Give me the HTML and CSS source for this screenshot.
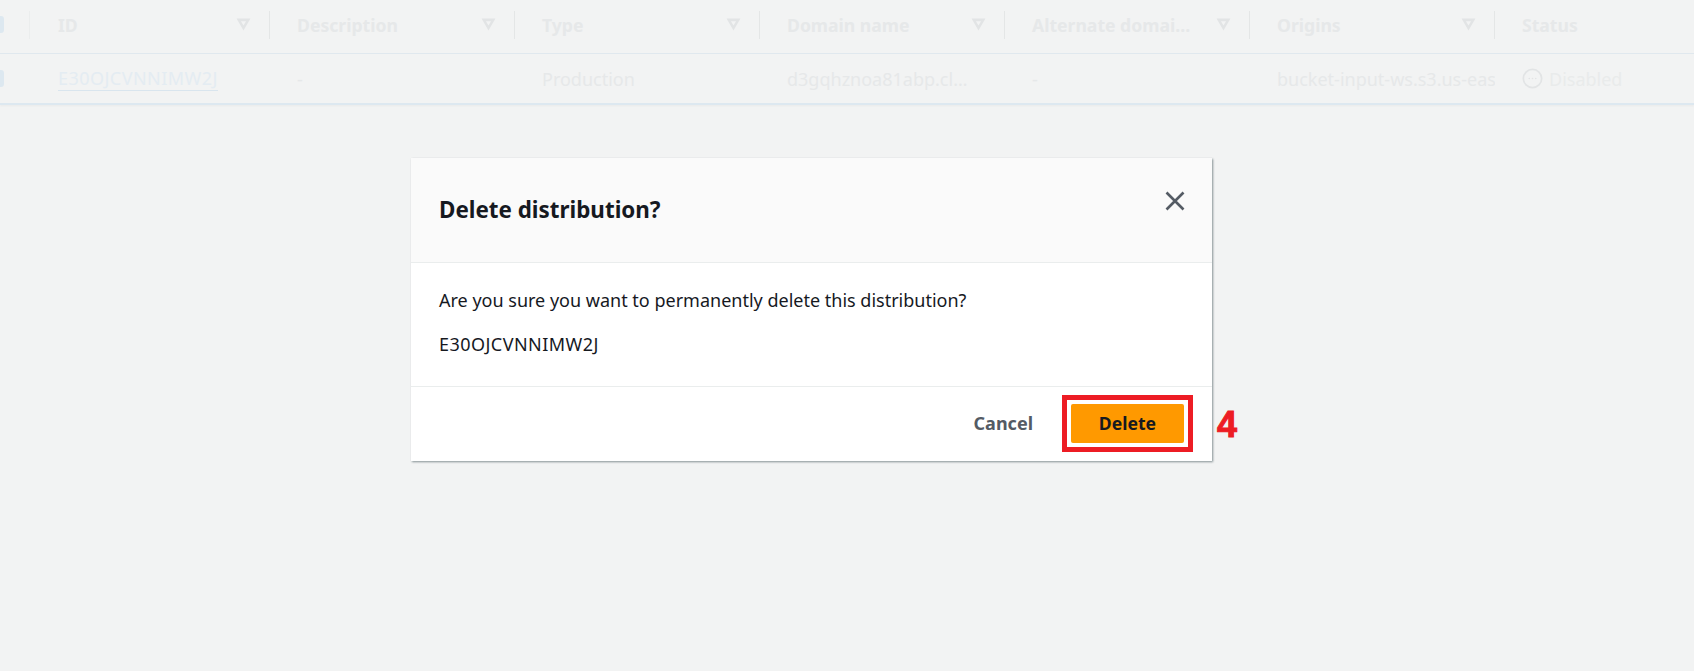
FILE: index.html
```html
<!DOCTYPE html>
<html lang="en">
<head>
<meta charset="utf-8">
<title>Delete distribution</title>
<link rel="stylesheet" href="styles.css">
</head>
<body>
<div class="table">
  <div class="row head">
    <div class="check-cell"><span class="check"></span></div>
    <div class="cell first"><span class="label">ID</span><svg class="sort" viewBox="0 0 14 12"><path d="M.5 .5h13L7 11.5z M4.6 2.9h4.8L7 7z"/></svg></div>
    <div class="cell"><span class="label">Description</span><svg class="sort" viewBox="0 0 14 12"><path d="M.5 .5h13L7 11.5z M4.6 2.9h4.8L7 7z"/></svg></div>
    <div class="cell"><span class="label">Type</span><svg class="sort" viewBox="0 0 14 12"><path d="M.5 .5h13L7 11.5z M4.6 2.9h4.8L7 7z"/></svg></div>
    <div class="cell"><span class="label">Domain name</span><svg class="sort" viewBox="0 0 14 12"><path d="M.5 .5h13L7 11.5z M4.6 2.9h4.8L7 7z"/></svg></div>
    <div class="cell"><span class="label">Alternate domai…</span><svg class="sort" viewBox="0 0 14 12"><path d="M.5 .5h13L7 11.5z M4.6 2.9h4.8L7 7z"/></svg></div>
    <div class="cell"><span class="label">Origins</span><svg class="sort" viewBox="0 0 14 12"><path d="M.5 .5h13L7 11.5z M4.6 2.9h4.8L7 7z"/></svg></div>
    <div class="cell last"><span class="label">Status</span></div>
  </div>
  <div class="row body">
    <div class="check-cell"><span class="check"></span></div>
    <div class="cell first"><a class="link">E30OJCVNNIMW2J</a></div>
    <div class="cell"><span class="value">-</span></div>
    <div class="cell"><span class="value">Production</span></div>
    <div class="cell"><span class="value">d3gqhznoa81abp.cl…</span></div>
    <div class="cell"><span class="value">-</span></div>
    <div class="cell"><span class="value">bucket-input-ws.s3.us-eas</span></div>
    <div class="cell last status"><svg class="status-icon" viewBox="0 0 22 22"><circle cx="11" cy="11" r="9.6"/><circle class="dot" cx="7.6" cy="11" r=".85"/><circle class="dot" cx="11" cy="11" r=".85"/><circle class="dot" cx="14.4" cy="11" r=".85"/></svg><span class="status-text">Disabled</span></div>
  </div>
</div>

<div class="modal-layer">
  <section class="dialog">
    <header class="dialog-head">
      <h2 class="dialog-title">Delete distribution?</h2>
      <svg class="close" viewBox="0 0 20 20"><path d="M1.5 1.5l17 17M18.5 1.5l-17 17"/></svg>
    </header>
    <div class="dialog-body">
      <p class="line">Are you sure you want to permanently delete this distribution?</p>
      <p class="line id-line">E30OJCVNNIMW2J</p>
    </div>
    <footer class="dialog-foot">
      <button class="btn-cancel">Cancel</button>
      <div class="highlight">
        <button class="btn-delete">Delete</button>
        <span class="step">4</span>
      </div>
    </footer>
  </section>
</div>
</body>
</html>
```
FILE: styles.css
```css
* { box-sizing: border-box; }
html, body { margin: 0; height: 100%; }
body {
  background: #f2f3f3;
  font-family: "Noto Sans", "Open Sans", sans-serif;
  color: #16191f;
  overflow: hidden;
}
.table { height: 105px; border-bottom: 2px solid #dde8f0; box-shadow: 0 1px 2px rgba(0,0,0,.04); }
.row { display: flex; align-items: center; }
.head { height: 54px; border-bottom: 1px solid #e0e8ee; padding-bottom: 4px; }
.body { height: 49px; }
.check-cell { width: 30px; flex: none; height: 100%; display: flex; align-items: center; }
.check { width: 4px; height: 17px; background: #dde8f0; border-radius: 0 3px 3px 0; }
.head .check-cell { height: 28px; border-right: 1px solid #ebeded; }
.cell {
  width: 245px; flex: none; display: flex; align-items: center; justify-content: space-between;
  padding: 0 18px 0 27px; height: 26px; white-space: nowrap; overflow: hidden; font-size: 18px;
}
.cell.first { width: 240px; padding-left: 28px; }
.head .cell { border-right: 1px solid #e4e6e6; height: 28px; font-size: 17.6px; font-weight: 700; }
.head .cell.last { border-right: 0; }
.label { color: #e6e8e9; }
.sort { width: 15px; height: 13px; fill: #e2e4e5; fill-rule: evenodd; flex: none; }
.link { color: #e4ecf2; border-bottom: 1px solid #d9e5ee; line-height: 23px; letter-spacing: .45px; }
.value { color: #e6e8e9; }
.body .cell { padding-right: 0; justify-content: flex-start; }
.status { gap: 6px; }
.status-icon { width: 21px; height: 21px; fill: none; stroke: #e2e4e5; stroke-width: 1.8; flex: none; }
.dot { fill: #e2e4e5; stroke: none; }
.status-text { color: #e9ebeb; }

.modal-layer { padding: 53px 0 0 411px; }
.dialog { width: 801px; height: 303px; background: #fff; box-shadow: 1px 1px 2px rgba(0,28,36,.45); display: flex; flex-direction: column; }
.dialog-head {
  height: 105px; flex: none; background: #fafafa; border-bottom: 1px solid #eaeded;
  display: flex; align-items: center; justify-content: space-between; padding: 0 27px 0 28px;
}
.dialog-title { margin: 0; font-size: 22.4px; font-weight: 700; line-height: 28px; color: #16191f; }
.close { width: 20px; height: 20px; margin-bottom: 18px; fill: none; stroke: #545b64; stroke-width: 2.6; }
.dialog-body { height: 124px; flex: none; border-bottom: 1px solid #eaeded; padding: 26px 28px 0; }
.line { margin: 0 0 22px; font-size: 18px; line-height: 22px; color: #16191f; }
.id-line { letter-spacing: .45px; }
.dialog-foot { flex: 1; display: flex; align-items: center; justify-content: flex-end; padding: 0 19px 2px 0; gap: 29px; }
.btn-cancel { background: none; border: 0; padding: 0; font: 700 18px "Noto Sans", sans-serif; color: #545b64; }
.highlight { position: relative; border: 5px solid #ed1c24; padding: 4px; background: #fff; width: 131px; height: 57px; }
.btn-delete { display: block; width: 100%; height: 100%; background: #ff9900; border: 0; border-radius: 2px; padding: 0; font: 700 17.6px "Noto Sans", sans-serif; color: #16191f; }
.step { position: absolute; left: 150px; top: 3px; font: 700 36px/44px "Liberation Sans", sans-serif; color: #ed1c24; -webkit-text-stroke: 1px #ed1c24; }
```
